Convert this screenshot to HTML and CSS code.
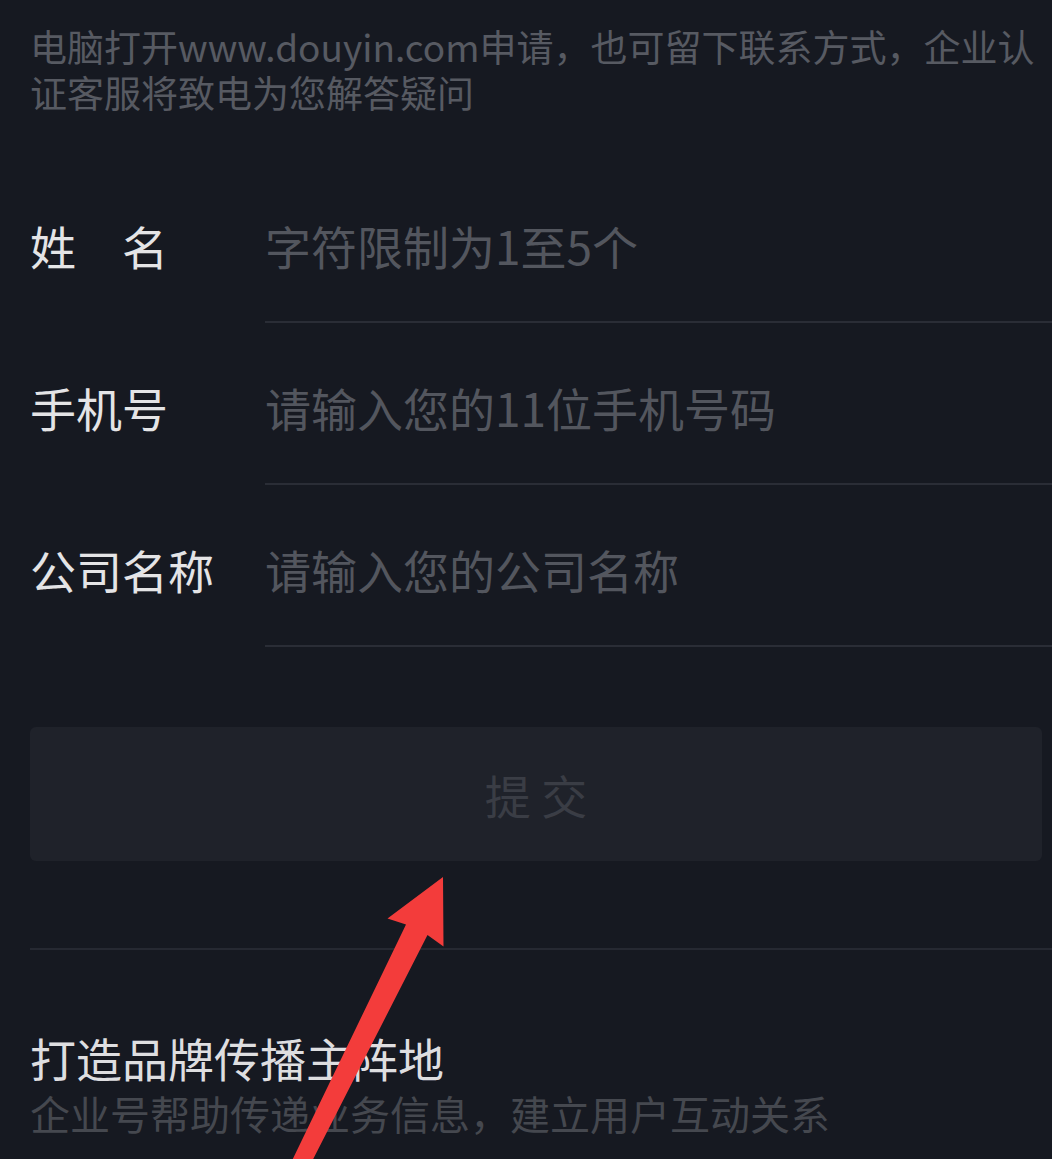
FILE: index.html
```html
<!DOCTYPE html>
<html lang="zh-CN">
<head>
<meta charset="utf-8">
<title>企业认证</title>
<link rel="stylesheet" href="styles.css">
</head>
<body>
<div class="page">
  <p class="intro">电脑打开<span class="url">www.douyin.com</span>申请，也可留下联系方式，企业认<br>证客服将致电为您解答疑问</p>

  <div class="form">
    <div class="row">
      <div class="label">姓　名</div>
      <div class="field">字符限制为1至5个</div>
    </div>
    <div class="row">
      <div class="label">手机号</div>
      <div class="field">请输入您的11位手机号码</div>
    </div>
    <div class="row">
      <div class="label">公司名称</div>
      <div class="field">请输入您的公司名称</div>
    </div>
  </div>

  <div class="submit">提 交</div>

  <div class="divider"></div>

  <div class="promo">
    <div class="promo-title">打造品牌传播主阵地</div>
    <div class="promo-sub">企业号帮助传递业务信息，建立用户互动关系</div>
  </div>
</div>

<svg class="annotation" width="1052" height="1159" viewBox="0 0 1052 1159" xmlns="http://www.w3.org/2000/svg">
  <polygon points="443,877 443.5,946.5 427.5,935 303,1179 287,1171 406,924.5 387.5,918.5" fill="#f33c3b"/>
</svg>
</body>
</html>
```

FILE: styles.css
```css
html, body {
  margin: 0;
  padding: 0;
}

body {
  width: 1052px;
  height: 1159px;
  overflow: hidden;
  position: relative;
  background: #161921;
  font-family: "Noto Sans CJK SC", "Noto Sans", sans-serif;
}

.page {
  padding: 23px 0 0 30px;
}

.intro {
  margin: 0;
  font-size: 37px;
  line-height: 46px;
  color: #575a62;
  white-space: nowrap;
}

.url {
  letter-spacing: 0;
}

.form {
  margin-top: 46px;
}

.row {
  display: flex;
  align-items: flex-start;
}

.label {
  width: 235px;
  flex: 0 0 235px;
  padding-top: 61px;
  font-size: 46px;
  line-height: 46px;
  color: #e4e4e6;
  white-space: nowrap;
}

.field {
  flex: 1;
  padding: 61px 0 53px 0;
  font-size: 46px;
  line-height: 46px;
  color: #53565e;
  border-bottom: 2px solid #2a2d36;
  white-space: nowrap;
}

.submit {
  margin: 80px 10px 0 0;
  height: 134px;
  background: #1f222a;
  border-radius: 6px;
  display: flex;
  align-items: center;
  justify-content: center;
  font-size: 46px;
  color: #3a3d45;
}

.divider {
  margin-top: 87px;
  height: 2px;
  background: #262932;
}

.promo {
  margin-top: 79px;
}

.promo-title {
  font-size: 46px;
  line-height: 56px;
  color: #dedee0;
  white-space: nowrap;
}

.promo-sub {
  margin-top: 4px;
  font-size: 40px;
  line-height: 48px;
  color: #45484f;
  white-space: nowrap;
}

.annotation {
  position: absolute;
  left: 0;
  top: 0;
  pointer-events: none;
}
```
